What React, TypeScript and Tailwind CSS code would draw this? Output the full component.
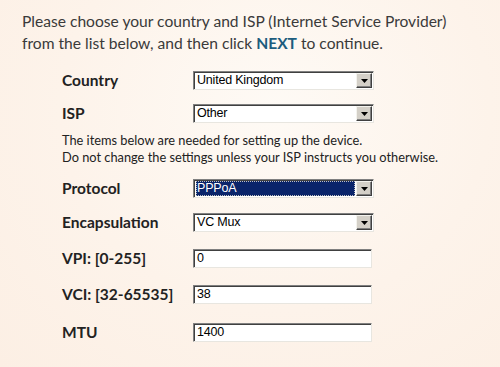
import { ReactNode } from "react";

const Arrow = () => (
  <div className="w-[16px] h-[15px] bg-[#d4d0c8] border border-t-[#f4f3ee] border-l-[#f4f3ee] border-b-[#404040] border-r-[#404040] flex items-center justify-center shadow-[inset_-1px_-1px_0_#808080]">
    <svg width="7" height="4" viewBox="0 0 7 4">
      <path d="M0 0h7L3.5 4z" fill="#000" />
    </svg>
  </div>
);

type SelectProps = { value: string; highlighted?: boolean };

const Select = ({ value, highlighted }: SelectProps) => (
  <div className="w-[181px] h-[19px] bg-white flex items-center border border-t-[#808080] border-l-[#808080] border-b-[#e8e6e0] border-r-[#e8e6e0] shadow-[inset_1px_1px_0_#404040]">
    <div className="flex-1 h-full pl-[2px] pr-[1px] py-[1px] flex">
      <div
        className={
          highlighted
            ? "flex-1 bg-[#0a246a] text-white outline outline-1 outline-dotted outline-[#c0c0c0] -outline-offset-1 pl-[1px] flex items-center"
            : "flex-1 text-black pl-[1px] flex items-center"
        }
      >
        <span className="text-[12.5px] leading-none font-['Liberation_Sans',Arial,sans-serif] tracking-[-0.2px]">
          {value}
        </span>
      </div>
    </div>
    <div className="pr-[1px]">
      <Arrow />
    </div>
  </div>
);

const TextInput = ({ value }: { value: string }) => (
  <div className="w-[179px] h-[19px] bg-white flex items-center pl-[3px] border border-t-[#808080] border-l-[#808080] border-b-[#e8e6e0] border-r-[#e8e6e0] shadow-[inset_1px_1px_0_#404040]">
    <span className="text-[12.5px] leading-none text-black font-['Liberation_Sans',Arial,sans-serif] tracking-[-0.2px]">
      {value}
    </span>
  </div>
);

type RowProps = { label: string; children: ReactNode; className?: string };

const Row = ({ label, children, className }: RowProps) => (
  <div className={"flex items-center h-[19px] " + (className ?? "")}>
    <div className="w-[131px] text-[15.5px] font-bold text-[#222] leading-none">{label}</div>
    {children}
  </div>
);

export default function App() {
  return (
    <div className="w-[500px] h-[367px] overflow-hidden bg-[#fdf0e6] bg-[radial-gradient(ellipse_at_55%_30%,#fefaf5_0%,#fdf3ea_55%,#fcefe4_100%)] font-['Lato','Open_Sans',sans-serif] text-[#333]">
      <div className="pl-[22px] pt-[10px] text-[15.6px] leading-[22px] text-[#3a3a3a]">
        <p>Please choose your country and ISP (Internet Service Provider)</p>
        <p>
          from the list below, and then click{" "}
          <span className="font-bold text-[#1d5d7e]">NEXT</span> to continue.
        </p>
      </div>

      <div className="pl-[62px] flex flex-col">
        <Row label="Country" className="mt-[17px]">
          <Select value="United Kingdom" />
        </Row>
        <Row label="ISP" className="mt-[14px]">
          <Select value="Other" />
        </Row>
        <div className="mt-[9px] text-[12.8px] leading-[17px] text-[#222]">
          <p>The items below are needed for setting up the device.</p>
          <p>Do not change the settings unless your ISP instructs you otherwise.</p>
        </div>
        <Row label="Protocol" className="mt-[13px]">
          <Select value="PPPoA" highlighted />
        </Row>
        <Row label="Encapsulation" className="mt-[15px]">
          <Select value="VC Mux" />
        </Row>
        <Row label="VPI: [0-255]" className="mt-[17px]">
          <TextInput value="0" />
        </Row>
        <Row label="VCI: [32-65535]" className="mt-[17px]">
          <TextInput value="38" />
        </Row>
        <Row label="MTU" className="mt-[19px]">
          <TextInput value="1400" />
        </Row>
      </div>
    </div>
  );
}
